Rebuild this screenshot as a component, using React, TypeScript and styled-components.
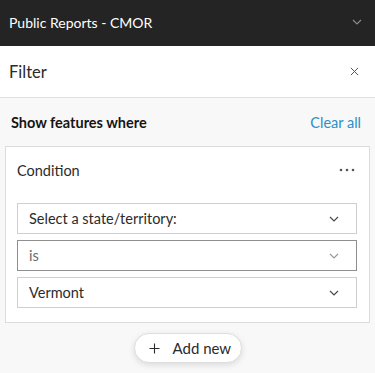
import React from "react";
import styled, { createGlobalStyle } from "styled-components";

const Global = createGlobalStyle`
  html, body { margin: 0; padding: 0; background: #f8f8f8; }
  body { font-family: "Lato", "Open Sans", sans-serif; -webkit-font-smoothing: antialiased; }
  * { box-sizing: border-box; }
`;

const Page = styled.div`
  width: 375px;
  height: 373px;
  display: flex;
  flex-direction: column;
  background: #f8f8f8;
  overflow: hidden;
`;

const Header = styled.div`
  height: 46px;
  flex: none;
  background: #242424;
  color: #ffffff;
  display: flex;
  align-items: center;
  justify-content: space-between;
  padding: 0 13px 2px 9px;
  font-size: 14px;
`;

const Panel = styled.div`
  height: 52px;
  flex: none;
  background: #ffffff;
  border-bottom: 1px solid #e0e0e0;
  display: flex;
  align-items: center;
  justify-content: space-between;
  padding: 0 16px 0 9px;
  font-size: 16.5px;
  color: #2b2b2b;
`;

const Body = styled.div`
  flex: 1;
  display: flex;
  flex-direction: column;
  padding: 0 5px;
`;

const SubHeader = styled.div`
  height: 48px;
  display: flex;
  align-items: center;
  justify-content: space-between;
  padding: 0 9px 0 6px;
`;

const Strong = styled.span`
  font-weight: 700;
  font-size: 14.5px;
  color: #151515;
`;

const LinkText = styled.span`
  color: #2d8ec7;
  font-size: 14.5px;
`;

const Card = styled.div`
  background: #ffffff;
  border: 1px solid #dcdcdc;
  padding: 0 12px 14px 11px;
  display: flex;
  flex-direction: column;
  gap: 6px;
`;

const CardHead = styled.div`
  height: 46px;
  display: flex;
  align-items: center;
  justify-content: space-between;
  padding-right: 2px;
  margin-bottom: 4px;
  font-size: 14.5px;
  color: #2b2b2b;
`;

const Select = styled.div<{ $strong?: boolean; $muted?: boolean }>`
  height: 31px;
  border: 1px solid ${(p) => (p.$strong ? "#8f8f8f" : "#cfcfcf")};
  background: #fff;
  display: flex;
  align-items: center;
  justify-content: space-between;
  padding: 0 17px 0 11px;
  font-size: 14.5px;
  color: ${(p) => (p.$muted ? "#6a6a6a" : "#2b2b2b")};
`;

const Footer = styled.div`
  display: flex;
  justify-content: center;
  padding-top: 10px;
`;

const AddButton = styled.div`
  width: 108px;
  height: 30px;
  border-radius: 15px;
  background: #fff;
  border: 1px solid #dedede;
  box-shadow: 0 2px 6px rgba(0, 0, 0, 0.12);
  display: flex;
  align-items: center;
  gap: 13px;
  padding-left: 14px;
  font-size: 15px;
  color: #2b2b2b;
`;

const Chevron = ({ color = "#4a4a4a" }: { color?: string }) => (
  <svg width="10" height="6" viewBox="0 0 10 6">
    <path d="M1 1 L5 5 L9 1" fill="none" stroke={color} strokeWidth="1.2" />
  </svg>
);

const Close = () => (
  <svg width="9" height="9" viewBox="0 0 10 10">
    <path d="M1 1 L9 9 M9 1 L1 9" fill="none" stroke="#555" strokeWidth="1.1" />
  </svg>
);

const Dots = () => (
  <svg width="16" height="4" viewBox="0 0 16 4">
    <circle cx="2" cy="2" r="1.3" fill="#555" />
    <circle cx="8" cy="2" r="1.3" fill="#555" />
    <circle cx="14" cy="2" r="1.3" fill="#555" />
  </svg>
);

const Plus = () => (
  <svg width="11" height="11" viewBox="0 0 11 11">
    <path d="M5.5 0.5 V10.5 M0.5 5.5 H10.5" fill="none" stroke="#2b2b2b" strokeWidth="1.1" />
  </svg>
);

export default function App() {
  return (
    <Page>
      <Global />
      <Header>
        <span>Public Reports - CMOR</span>
        <Chevron color="#8a8a8a" />
      </Header>
      <Panel>
        <span>Filter</span>
        <Close />
      </Panel>
      <Body>
        <SubHeader>
          <Strong>Show features where</Strong>
          <LinkText>Clear all</LinkText>
        </SubHeader>
        <Card>
          <CardHead>
            <span>Condition</span>
            <Dots />
          </CardHead>
          <Select>
            <span>Select a state/territory:</span>
            <Chevron />
          </Select>
          <Select $strong $muted>
            <span>is</span>
            <Chevron color="#9a9a9a" />
          </Select>
          <Select>
            <span>Vermont</span>
            <Chevron />
          </Select>
        </Card>
        <Footer>
          <AddButton>
            <Plus />
            <span>Add new</span>
          </AddButton>
        </Footer>
      </Body>
    </Page>
  );
}
